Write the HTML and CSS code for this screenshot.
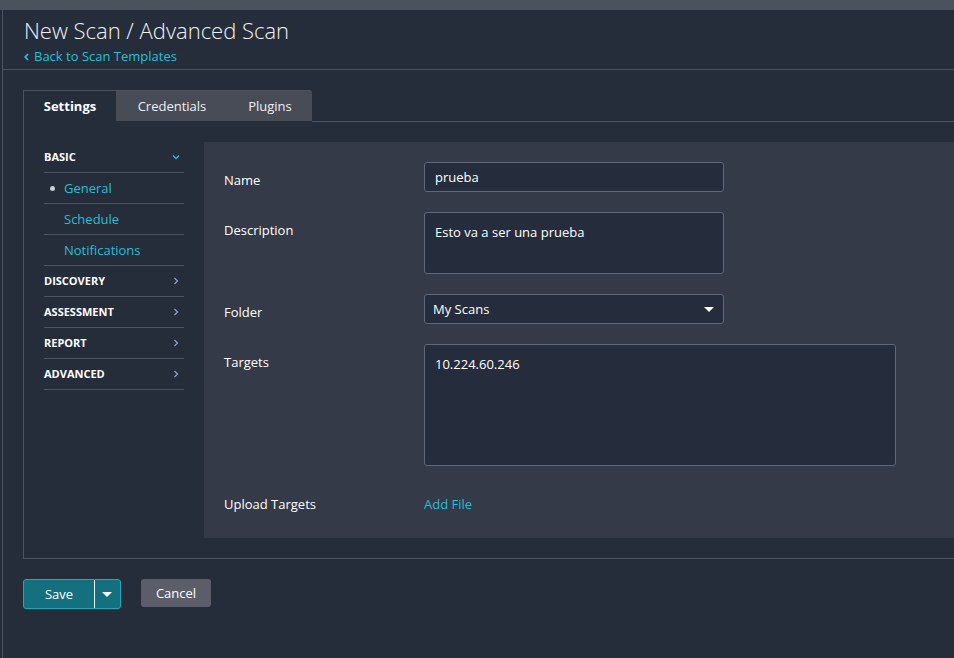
FILE: index.html
```html
<!DOCTYPE html>
<html>
<head>
<meta charset="utf-8">
<link rel="stylesheet" href="styles.css">
</head>
<body>
<div class="topbar"></div>
<div class="main">
  <div class="header">
    <h1 class="title">New Scan / Advanced Scan</h1>
    <a class="back"><svg class="back-ico" width="5" height="8" viewBox="0 0 5 8"><path d="M4 1 L1.2 4 L4 7" fill="none" stroke="currentColor" stroke-width="1.8"/></svg>Back to Scan Templates</a>
  </div>
  <div class="scanbox">
    <div class="tabs">
      <div class="tab active">Settings</div>
      <div class="tab">Credentials</div>
      <div class="tab last">Plugins</div>
      <div class="tab-fill"></div>
    </div>
    <div class="boxbody">
      <ul class="side">
        <li class="side-head">BASIC<svg class="chev down" width="8" height="6" viewBox="0 0 8 6"><path d="M1 1.5 L4 4.5 L7 1.5" fill="none" stroke="currentColor" stroke-width="1.3"/></svg></li>
        <li class="side-sub current"><span class="dot"></span>General</li>
        <li class="side-sub">Schedule</li>
        <li class="side-sub">Notifications</li>
        <li class="side-head">DISCOVERY<svg class="chev" width="6" height="8" viewBox="0 0 6 8"><path d="M1.5 1 L4.5 4 L1.5 7" fill="none" stroke="currentColor" stroke-width="1.3"/></svg></li>
        <li class="side-head">ASSESSMENT<svg class="chev" width="6" height="8" viewBox="0 0 6 8"><path d="M1.5 1 L4.5 4 L1.5 7" fill="none" stroke="currentColor" stroke-width="1.3"/></svg></li>
        <li class="side-head">REPORT<svg class="chev" width="6" height="8" viewBox="0 0 6 8"><path d="M1.5 1 L4.5 4 L1.5 7" fill="none" stroke="currentColor" stroke-width="1.3"/></svg></li>
        <li class="side-head">ADVANCED<svg class="chev" width="6" height="8" viewBox="0 0 6 8"><path d="M1.5 1 L4.5 4 L1.5 7" fill="none" stroke="currentColor" stroke-width="1.3"/></svg></li>
      </ul>
      <div class="panel">
        <div class="row">
          <div class="label">Name</div>
          <div class="field input">prueba</div>
        </div>
        <div class="row">
          <div class="label">Description</div>
          <div class="field textarea desc">Esto va a ser una prueba</div>
        </div>
        <div class="row">
          <div class="label">Folder</div>
          <div class="field select">My Scans<span class="caret"></span></div>
        </div>
        <div class="row">
          <div class="label">Targets</div>
          <div class="field textarea targets">10.224.60.246</div>
        </div>
        <div class="row upload">
          <div class="label">Upload Targets</div>
          <a class="addfile">Add File</a>
        </div>
      </div>
    </div>
  </div>
  <div class="actions">
    <div class="save"><span class="save-main">Save</span><span class="save-drop"><span class="caret white"></span></span></div>
    <div class="cancel">Cancel</div>
  </div>
</div>
</body>
</html>
```

FILE: styles.css
```css
* { box-sizing: border-box; }
html, body { margin: 0; padding: 0; }
body {
  background: #232b38;
  font-family: "Open Sans", "Noto Sans", sans-serif;
  color: #e8ecf0;
  width: 954px;
  height: 658px;
  overflow: hidden;
}
.topbar {
  height: 10px;
  background: #4a525d;
}
.main {
  margin-left: 2px;
  border-left: 1px solid #4b5361;
  background: #252d3b;
  height: 648px;
}
.header {
  height: 60px;
  border-bottom: 1px solid #4b5361;
  padding: 5px 0 0 21px;
}
.title {
  margin: 0 0 2px;
  font-size: 22px;
  font-weight: 300;
  line-height: 30px;
  color: #eef1f4;
}
.back {
  display: flex;
  align-items: center;
  font-size: 13px;
  line-height: 18px;
  color: #27bfd6;
}
.back-ico { margin-right: 5px; margin-top: 1px; }

.scanbox {
  margin: 20px 0 0 20px;
  border-left: 1px solid #4b5361;
  border-bottom: 1px solid #4b5361;
  height: 469px;
}
.tabs {
  display: flex;
  height: 32px;
}
.tab {
  height: 31px;
  font-size: 13px;
  line-height: 31px;
  text-align: center;
  background: #474c57;
  color: #eef1f4;
  border-top: 1px solid #4b5361;
}
.tab.active {
  width: 92px;
  background: #252d3b;
  font-weight: 700;
  color: #ffffff;
  height: 32px;
}
.tab:nth-child(2) { width: 112px; }
.tab.last { width: 84px; border-top-right-radius: 3px; }
.tab-fill {
  flex: 1;
  border-bottom: 1px solid #4b5361;
}
.boxbody {
  display: flex;
  padding: 20px 0 0 20px;
  gap: 20px;
}
.side {
  list-style: none;
  margin: 0;
  padding: 0;
  width: 140px;
  flex: none;
}
.side li {
  height: 31px;
  border-bottom: 1px solid #4b5361;
  display: flex;
  align-items: center;
}
.side-head {
  font-size: 11px;
  font-weight: 700;
  color: #ffffff;
  justify-content: space-between;
  padding-right: 5px;
  padding-bottom: 2px;
}
.chev { color: #8aa0c4; margin-top: 2px; }
.chev.down { color: #27bfd6; margin-right: -1px; }
.side-sub {
  font-size: 13px;
  color: #25bed6;
  padding-left: 20px;
  position: relative;
}
.dot {
  position: absolute;
  left: 6px;
  top: 13px;
  width: 5px;
  height: 5px;
  border-radius: 50%;
  background: #c9ccd1;
}
.panel {
  flex: 1;
  background: #343a47;
  height: 396px;
  padding: 20px 0 0 20px;
}
.row {
  display: flex;
  margin-bottom: 20px;
}
.label {
  width: 200px;
  flex: none;
  font-size: 13px;
  color: #ffffff;
  padding-top: 9px;
  line-height: 18px;
}
.field {
  background: #252d3c;
  border: 1px solid #5e687b;
  border-radius: 3px;
  font-size: 13px;
  color: #ffffff;
  line-height: 18px;
}
.input {
  width: 300px;
  height: 30px;
  padding: 5px 10px;
}
.textarea.desc {
  width: 300px;
  height: 62px;
  padding: 10px 10px;
}
.select {
  width: 300px;
  height: 30px;
  padding: 5px 8px;
  display: flex;
  justify-content: space-between;
  align-items: center;
}
.caret {
  width: 0;
  height: 0;
  border-left: 5px solid transparent;
  border-right: 5px solid transparent;
  border-top: 5px solid #ffffff;
  margin-right: 1px;
}
.textarea.targets {
  width: 472px;
  height: 122px;
  padding: 10px 10px;
}
.row.upload { margin-top: 29px; }
.upload .label { padding-top: 0; }
.addfile {
  font-size: 13px;
  line-height: 18px;
  color: #27bfd6;
}
.actions {
  display: flex;
  gap: 20px;
  margin: 20px 0 0 20px;
}
.save {
  display: flex;
  height: 30px;
  width: 98px;
  background: #14707e;
  border: 1px solid #1fa9bb;
  border-radius: 3px;
  color: #ffffff;
  font-size: 13px;
}
.save-main {
  width: 71px;
  text-align: center;
  line-height: 29px;
  border-right: 1px solid #e8f6f8;
}
.save-drop {
  flex: 1;
  display: flex;
  align-items: center;
  justify-content: center;
}
.cancel {
  width: 70px;
  height: 28px;
  background: #5b5e68;
  border-radius: 3px;
  color: #ffffff;
  font-size: 13px;
  line-height: 28px;
  text-align: center;
}
```
